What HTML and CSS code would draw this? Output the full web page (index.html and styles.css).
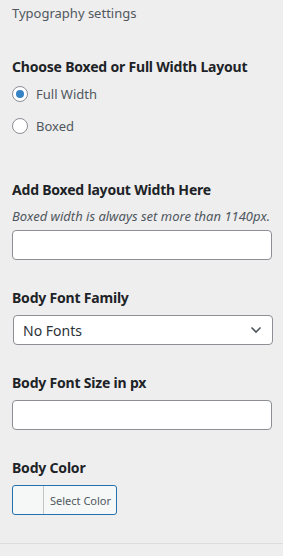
FILE: index.html
```html
<!DOCTYPE html>
<html>
<head>
<meta charset="utf-8" />
<title>Typography settings</title>
<link rel="stylesheet" href="styles.css">
</head>
<body>

<div class="panel">
  <div class="section-title">Typography settings</div>

  <!-- layout choice -->
  <div class="control control-radio">
    <div class="control-label">Choose Boxed or Full Width Layout</div>
    <label class="radio-row"><span class="radio checked"></span>Full Width</label>
    <label class="radio-row"><span class="radio"></span>Boxed</label>
  </div>

  <!-- boxed width -->
  <div class="control">
    <div class="control-label">Add Boxed layout Width Here</div>
    <div class="description">Boxed width is always set more than 1140px.</div>
    <input class="text-field" type="text">
  </div>

  <!-- font family -->
  <div class="control">
    <div class="control-label">Body Font Family</div>
    <div class="select-field">
      <span>No Fonts</span>
      <svg class="chevron" width="12" height="8" viewBox="0 0 12 8"><path d="M1.5 1.5 L6 6 L10.5 1.5" fill="none" stroke="#50575e" stroke-width="1.6"/></svg>
    </div>
  </div>

  <!-- font size -->
  <div class="control">
    <div class="control-label">Body Font Size in px</div>
    <input class="text-field" type="text">
  </div>

  <!-- color -->
  <div class="control">
    <div class="control-label">Body Color</div>
    <button class="color-button"><span class="swatch"></span><span class="color-text">Select Color</span></button>
  </div>
</div>
<div class="bottom-line"></div>

</body>
</html>
```

FILE: styles.css
```css
body {
	margin: 0;
	background: #eeeeee;
	font-family: "Noto Sans", "Open Sans", sans-serif;
	color: #1d2327;
}

.panel {
	padding: 3px 12px 0 12px;
}

.section-title {
	font-size: 13px;
	line-height: 20px;
	color: #50575e;
}

.control {
	margin-top: 28px;
}

.control-radio {
	margin-top: 34px;
	padding-bottom: 10px;
}

.control-label {
	font-size: 14px;
	font-weight: bold;
	line-height: 20px;
	margin-bottom: 7px;
	letter-spacing: -0.2px;
}

.control-radio .control-label {
	margin-bottom: 1px;
}

.radio-row {
	display: flex;
	align-items: center;
	height: 32px;
	font-size: 13px;
	color: #50575e;
}

.radio {
	box-sizing: border-box;
	width: 16px;
	height: 16px;
	border: 1px solid #8c8f94;
	border-radius: 50%;
	background: #fff;
	margin-right: 8px;
	display: flex;
	align-items: center;
	justify-content: center;
}

.radio.checked::before {
	content: "";
	width: 8px;
	height: 8px;
	border-radius: 50%;
	background: #3582c4;
}

.description {
	font-size: 13px;
	font-style: italic;
	line-height: 18px;
	color: #50575e;
	margin-bottom: 5px;
	white-space: nowrap;
}

.text-field {
	display: block;
	box-sizing: border-box;
	width: 260px;
	height: 30px;
	margin: 0;
	border: 1px solid #8c8f94;
	border-radius: 4px;
	background: #fff;
}

.select-field {
	box-sizing: border-box;
	width: 260px;
	height: 30px;
	margin-left: 1px;
	border: 1px solid #8c8f94;
	border-radius: 4px;
	background: #fff;
	display: flex;
	align-items: center;
	justify-content: space-between;
	padding: 0 10px 0 9px;
	font-size: 14px;
	color: #2c3338;
}

.color-button {
	box-sizing: border-box;
	height: 30px;
	width: 105px;
	margin: 0;
	padding: 0;
	border: 1px solid #2271b1;
	border-radius: 3px;
	background: #f6f7f7;
	display: flex;
	align-items: stretch;
	font-family: inherit;
}

.swatch {
	width: 30px;
	border-right: 1px solid #c3c4c7;
}

.color-text {
	display: flex;
	align-items: center;
	padding-left: 6px;
	font-size: 11px;
	color: #50575e;
}

.bottom-line {
	margin-top: 28px;
	border-top: 1px solid #dcdcde;
}
```
